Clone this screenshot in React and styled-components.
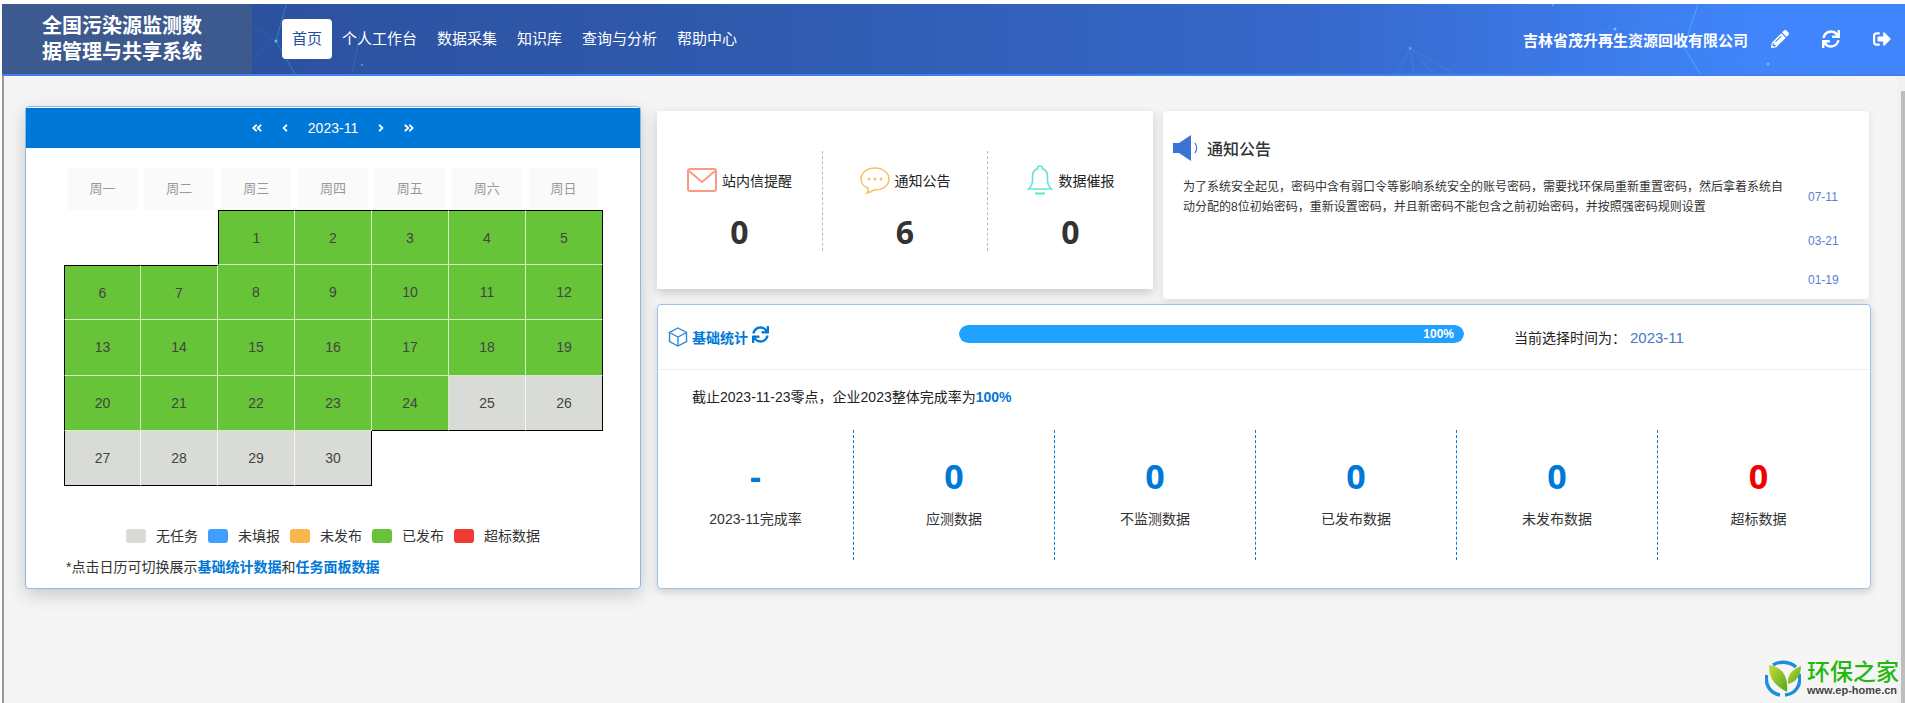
import { Fragment } from "react";
import styled, { createGlobalStyle } from "styled-components";
import {
  FaPencilAlt,
  FaSync,
  FaSignOutAlt,
  FaAngleDoubleLeft,
  FaAngleDoubleRight,
  FaAngleLeft,
  FaAngleRight,
} from "react-icons/fa";

const GlobalStyle = createGlobalStyle`
  html, body {
    margin: 0;
    padding: 0;
    height: 100%;
    overflow: hidden;
    background: #fff;
    font-family: "Liberation Sans", "Noto Sans CJK SC", sans-serif;
    font-size: 14px;
    color: #333;
  }
  * { box-sizing: border-box; }
`;

const navItems = ["首页", "个人工作台", "数据采集", "知识库", "查询与分析", "帮助中心"];
const weekDays = ["周一", "周二", "周三", "周四", "周五", "周六", "周日"];
const legend = [
  { label: "无任务", color: "#d9dbd6" },
  { label: "未填报", color: "#409eff" },
  { label: "未发布", color: "#fbb54d" },
  { label: "已发布", color: "#67c337" },
  { label: "超标数据", color: "#ee3a34" },
];
const baseStats = [
  { value: "-", label: "2023-11完成率" },
  { value: "0", label: "应测数据" },
  { value: "0", label: "不监测数据" },
  { value: "0", label: "已发布数据" },
  { value: "0", label: "未发布数据" },
  { value: "0", label: "超标数据", danger: true },
];

// the month starts on a wednesday, so two slots stay empty
const FIRST_SLOT = 2;
const DAY_COUNT = 30;
const isFilled = (slot) => slot >= FIRST_SLOT && slot < FIRST_SLOT + DAY_COUNT;

const slots = Array.from({ length: 35 }, (_, slot) => {
  if (!isFilled(slot)) return { slot, day: null };
  const col = slot % 7;
  return {
    slot,
    day: slot - FIRST_SLOT + 1,
    top: !isFilled(slot - 7),
    bottom: !isFilled(slot + 7),
    left: col === 0 || !isFilled(slot - 1),
    right: col === 6 || !isFilled(slot + 1),
  };
});

const Page = styled.div`
  display: flex;
  flex-direction: column;
  height: 703px;
  padding: 4px 0 0 2px;
  background: #fff;
  position: relative;
  overflow: hidden;
`;

const Header = styled.header`
  position: relative;
  display: flex;
  align-items: center;
  flex: 0 0 72px;
  height: 72px;
  border-bottom: 2px solid #4080f0;
  background: linear-gradient(90deg, #2b4d98 0%, #2f5aae 40%, #3769cc 70%, #4085fb 92%);
`;

const HeaderArt = styled.svg`
  position: absolute;
  left: 0;
  top: 0;
  pointer-events: none;
`;

const Brand = styled.div`
  position: relative;
  flex: 0 0 250px;
  align-self: stretch;
  display: flex;
  align-items: center;
  padding-left: 40px;
  background: #3c5a8e;
  color: #fff;
  font-size: 20px;
  font-weight: 700;
  line-height: 26px;
`;

const Nav = styled.nav`
  position: relative;
  display: flex;
  align-items: center;
  margin-left: 30px;
`;

const NavItem = styled.div`
  height: 40px;
  line-height: 40px;
  padding: 0 10px;
  font-size: 15px;
  border-radius: 4px;
  color: ${(p) => (p.$active ? "#23509f" : "#fff")};
  background: ${(p) => (p.$active ? "#fff" : "transparent")};
`;

const HeaderRight = styled.div`
  position: relative;
  display: flex;
  align-items: center;
  margin-left: auto;
  padding-right: 14px;
  color: #fff;
`;

const Company = styled.span`
  font-weight: 700;
  font-size: 15px;
  margin-right: 23px;
`;

const HeaderIcon = styled.span`
  display: inline-flex;
  font-size: 18px;
  margin-left: ${(p) => p.$gap || 0}px;
`;

const Main = styled.main`
  flex: 1;
  display: flex;
  align-items: flex-start;
  gap: 16px;
  padding: 30px 0 0 21px;
  background: #f5f5f5;
  border-left: 2px solid #999;
`;

const CalendarCard = styled.section`
  width: 616px;
  height: 483px;
  padding-top: 1px;
  background: #fff;
  border: 1px solid #8fb8ea;
  border-radius: 4px;
  box-shadow: 0 6px 18px rgba(0, 0, 0, 0.18);
`;

const MonthBar = styled.div`
  display: flex;
  align-items: center;
  justify-content: center;
  height: 40px;
  background: #0078d7;
  color: #fff;
  font-size: 14px;
`;

const MonthArrow = styled.span`
  display: inline-flex;
  font-size: 12px;
  margin: 0 ${(p) => p.$gap}px;
`;

const MonthLabel = styled.span`
  margin: 0 9px;
`;

const WeekRow = styled.div`
  display: grid;
  grid-template-columns: repeat(7, 1fr);
  width: 538px;
  margin: 20px 0 0 38px;
`;

const WeekDay = styled.div`
  height: 42px;
  line-height: 42px;
  margin: 0 3.5px;
  text-align: center;
  background: #fafafa;
  color: #999;
  font-size: 13px;
`;

const DayGrid = styled.div`
  display: grid;
  grid-template-columns: repeat(7, 1fr);
  grid-auto-rows: 55.2px;
  width: 539px;
  margin-left: 38px;
`;

const edge = (on, inner) => (on ? "1px solid #000" : inner ? "1px solid rgba(255,255,255,.7)" : "none");

const DayCell = styled.div`
  display: flex;
  align-items: center;
  justify-content: center;
  color: #444;
  font-size: 14px;
  background: ${(p) => (p.$done ? "#67c337" : "#d9dbd6")};
  border-top: ${(p) => edge(p.$top)};
  border-left: ${(p) => edge(p.$left)};
  border-right: ${(p) => edge(p.$right, true)};
  border-bottom: ${(p) => edge(p.$bottom, true)};
`;

const Legend = styled.div`
  display: flex;
  justify-content: center;
  align-items: center;
  gap: 10px;
  margin-top: 43px;
`;

const Swatch = styled.i`
  display: block;
  width: 20px;
  height: 14px;
  border-radius: 3px;
  background: ${(p) => p.$color};
`;

const LegendLabel = styled.span`
  font-size: 14px;
  line-height: 14px;
`;

const CalendarNote = styled.p`
  margin: 14px 0 0 40px;
  line-height: 20px;
  font-size: 14px;
`;

const NoteLink = styled.b`
  color: #0078d7;
  font-weight: 700;
`;

const RightColumn = styled.div`
  width: 1214px;
  margin-top: 5px;
`;

const TopRow = styled.div`
  display: flex;
  align-items: flex-start;
  gap: 10px;
`;

const MessageCard = styled.section`
  display: grid;
  grid-template-columns: 166px 165px 165px;
  width: 496px;
  height: 178px;
  padding-top: 40px;
  background: #fff;
  box-shadow: 0 4px 10px rgba(0, 0, 0, 0.18);
`;

const MessageItem = styled.div`
  height: 100px;
  padding-top: 11px;
  text-align: center;
  border-right: ${(p) => (p.$last ? "none" : "1px dashed #bbb")};
`;

const MessageHead = styled.div`
  display: flex;
  justify-content: center;
  align-items: center;
  gap: ${(p) => p.$gap || 5}px;
  height: 36px;
  font-size: 14px;
  color: #222;
`;

const MessageCount = styled.div`
  margin-top: 14px;
  line-height: 40px;
  font-family: "Open Sans", sans-serif;
  font-size: 32px;
  font-weight: 700;
  color: #333;
`;

const NoticeCard = styled.section`
  width: 706px;
  height: 188px;
  padding: 24px 0 0 10px;
  overflow: hidden;
  background: #fff;
  border-radius: 4px;
  box-shadow: 0 2px 8px rgba(0, 0, 0, 0.1);
`;

const NoticeTitle = styled.div`
  display: flex;
  align-items: center;
  gap: 9px;
  height: 26px;
  margin-bottom: 12px;
  font-size: 16px;
  font-weight: 500;
`;

const NoticeRow = styled.div`
  display: flex;
  align-items: center;
  height: ${(p) => p.$height}px;
  padding-left: 10px;
`;

const NoticeText = styled.p`
  flex: 0 0 606px;
  margin: 0;
  font-size: 12px;
  line-height: 20px;
`;

const NoticeDate = styled.span`
  margin-left: ${(p) => p.$gap}px;
  font-size: 12px;
  color: #5b80d0;
`;

const BaseCard = styled.section`
  width: 1214px;
  height: 285px;
  margin-top: 5px;
  background: #fff;
  border: 1px solid #9fc3ea;
  border-radius: 4px;
  box-shadow: 0 3px 8px rgba(0, 0, 0, 0.16);
`;

const BaseHead = styled.div`
  display: grid;
  grid-template-columns: 301px 505px 1fr;
  align-items: center;
  height: 65px;
  border-bottom: 1px solid #eee;
`;

const BaseTitle = styled.div`
  display: flex;
  align-items: center;
  gap: 4px;
  padding-left: 10px;
  color: #0078d7;
  font-size: 14px;
  font-weight: 700;
`;

const TitleRefresh = styled.span`
  display: inline-flex;
  font-size: 17px;
  margin-top: -6px;
`;

const ProgressTrack = styled.div`
  height: 18px;
  margin-bottom: 6px;
  border-radius: 9px;
  background: #e6ebf2;
  overflow: hidden;
`;

const ProgressBar = styled.div`
  height: 100%;
  padding-right: 10px;
  text-align: right;
  line-height: 18px;
  border-radius: 9px;
  background: #20a0ff;
  color: #fff;
  font-size: 12px;
  font-weight: 700;
`;

const CurrentTime = styled.div`
  padding-left: 50px;
  font-size: 14px;
  color: #222;
`;

const TimeValue = styled.span`
  margin-left: 4px;
  font-size: 15px;
  color: #3f78c8;
`;

const Summary = styled.p`
  margin: 17px 0 0 34px;
  line-height: 20px;
  font-size: 14px;
  color: #222;
`;

const SummaryValue = styled.b`
  color: #0078d7;
`;

const StatRow = styled.div`
  display: grid;
  grid-template-columns: 196px repeat(5, 201px);
  margin-top: 23px;
`;

const StatItem = styled.div`
  height: 130px;
  padding-top: 24px;
  text-align: center;
  border-right: ${(p) => (p.$last ? "none" : "1px dashed #0078d7")};
`;

const StatValue = styled.div`
  line-height: 44px;
  font-family: "Open Sans", sans-serif;
  font-size: 34px;
  font-weight: 700;
  color: ${(p) => (p.$danger ? "#f00000" : "#0078d7")};
`;

const StatLabel = styled.div`
  margin-top: 11px;
  line-height: 20px;
  font-size: 14px;
`;

const Watermark = styled.div`
  position: absolute;
  left: 1765px;
  top: 660px;
  display: flex;
  gap: 6px;
`;

const WatermarkText = styled.div`
  display: flex;
  flex-direction: column;
`;

const WatermarkName = styled.span`
  font-size: 23px;
  line-height: 25px;
  font-weight: 500;
  color: #22b80e;
`;

const WatermarkUrl = styled.span`
  font-size: 11px;
  line-height: 11px;
  font-weight: 700;
  color: #444;
  white-space: nowrap;
`;

const ScrollTrack = styled.div`
  position: absolute;
  right: 0;
  top: 76px;
  bottom: 0;
  width: 8px;
  padding-left: 4px;
  padding-top: 15px;
  background: #f1f1f1;
`;

const ScrollThumb = styled.div`
  height: 100%;
  background: #bdbdbd;
`;

function HeaderLines() {
  return (
    <HeaderArt width="1905" height="70" viewBox="0 0 1905 70">
      <g fill="none" stroke="#3fd0e8" strokeWidth="1">
        <path d="M285 -2 L274 37 L293 70" opacity=".35" />
        <path d="M274 37 L248 20 M274 37 L240 62" opacity=".12" />
        <path d="M358 30 L350 70" opacity=".2" />
        <path d="M1408 44 L1396 70 M1408 44 L1412 70 M1408 44 L1432 70 M1408 44 L1452 70" opacity=".2" />
        <path d="M1612 25 L1540 40 M1612 25 L1690 15 M1612 25 L1650 60" opacity=".1" />
        <path d="M1696 0 L1682 43 L1698 70" opacity=".6" />
        <path d="M1682 43 L1650 20 M1682 43 L1766 60" opacity=".1" />
        <path d="M1766 60 L1790 40 M1766 60 L1850 70" opacity=".1" />
      </g>
      <g fill="#63e2f2">
        <circle cx="274" cy="37" r="1.5" opacity=".8" />
        <circle cx="360" cy="61" r="1" opacity=".6" />
        <circle cx="1408" cy="44" r="1.5" opacity=".4" />
        <circle cx="1551" cy="1" r="1" opacity=".6" />
        <circle cx="1613" cy="25" r="1.5" opacity=".8" />
        <circle cx="1682" cy="43" r="1" opacity=".7" />
        <circle cx="1766" cy="60" r="1.5" opacity=".7" />
      </g>
    </HeaderArt>
  );
}

function MailIcon() {
  return (
    <svg width="30" height="24" viewBox="0 0 30 24" fill="none" stroke="#fa9a85" strokeWidth="2">
      <rect x="1" y="1" width="28" height="22" rx="2" />
      <path d="M2 3 L15 14 L28 3" />
    </svg>
  );
}

function ChatIcon() {
  return (
    <svg width="30" height="27" viewBox="0 0 30 27" fill="none" stroke="#fbbe6a" strokeWidth="1.6">
      <path d="M15 1 C7 1 1 6 1 12 C1 17 5 20 8 21 C8.5 23 8 25 7 26 C10 25.5 12 24 14 23 C22 23.5 29 19 29 12 C29 6 23 1 15 1 Z" />
      <g fill="#fbbe6a" stroke="none">
        <circle cx="9" cy="12" r="1.5" />
        <circle cx="15" cy="12" r="1.5" />
        <circle cx="21" cy="12" r="1.5" />
      </g>
    </svg>
  );
}

function BellIcon() {
  return (
    <svg width="26" height="30" viewBox="0 0 26 30" fill="none" stroke="#5de8d3" strokeWidth="1.7">
      <path d="M13 1 C11.5 1 10.5 2 10.5 3.6 C7 4.8 5.5 8 5.5 11.5 L5.5 16 C5.5 20 3.5 22 1.5 24 L24.5 24 C22.5 22 20.5 20 20.5 16 L20.5 11.5 C20.5 8 19 4.8 15.5 3.6 C15.5 2 14.5 1 13 1 Z" />
      <path d="M8 28.5 L18 28.5" strokeWidth="2" />
    </svg>
  );
}

function SpeakerIcon() {
  return (
    <svg width="25" height="26" viewBox="0 0 25 26">
      <path d="M0 8 L6 8 L18 0 L18 26 L6 18 L0 18 Z" fill="#3b73d4" />
      <path d="M22 8 C24 11 24 15 22 18" fill="none" stroke="#3b73d4" strokeWidth="1.2" />
    </svg>
  );
}

function CubeIcon() {
  return (
    <svg width="20" height="20" viewBox="0 0 20 20" fill="none" stroke="#2a8ad8" strokeWidth="1.4">
      <path d="M10 1 L18.5 5.5 L18.5 14.5 L10 19 L1.5 14.5 L1.5 5.5 Z" />
      <path d="M1.5 5.5 L10 10 L18.5 5.5 M10 10 L10 19" />
    </svg>
  );
}

function LeafLogo() {
  return (
    <svg width="36" height="37" viewBox="0 0 36 37">
      <defs>
        <linearGradient id="leaf" x1="0" y1="0" x2="1" y2="1">
          <stop offset="0" stopColor="#c9dc3c" />
          <stop offset="1" stopColor="#4fa71f" />
        </linearGradient>
      </defs>
      <g fill="none" stroke="#1b8fdc" strokeWidth="3.4">
        <path d="M8 5 C14 1 24 1 31 7" />
        <path d="M34 14 C37 24 31 34 20 35" />
        <path d="M15 35 C5 33 0 25 1.6 15" />
      </g>
      <path d="M4 5 C14 6 24 14 22 32 C14 28 3 20 4 5 Z" fill="url(#leaf)" />
      <path d="M23 24 C22 14 28 9 36 6 C36 14 32 22 23 24 Z" fill="url(#leaf)" />
    </svg>
  );
}

export default function App() {
  return (
    <>
      <GlobalStyle />
      <Page>
        <Header>
          <HeaderLines />
          <Brand>
            全国污染源监测数
            <br />
            据管理与共享系统
          </Brand>
          <Nav>
            {navItems.map((item, i) => (
              <NavItem key={item} $active={i === 0}>
                {item}
              </NavItem>
            ))}
          </Nav>
          <HeaderRight>
            <Company>吉林省茂升再生资源回收有限公司</Company>
            <HeaderIcon>
              <FaPencilAlt />
            </HeaderIcon>
            <HeaderIcon $gap={33}>
              <FaSync />
            </HeaderIcon>
            <HeaderIcon $gap={33}>
              <FaSignOutAlt />
            </HeaderIcon>
          </HeaderRight>
        </Header>

        <Main>
          <CalendarCard>
            <MonthBar>
              <MonthArrow $gap={8}>
                <FaAngleDoubleLeft />
              </MonthArrow>
              <MonthArrow $gap={8}>
                <FaAngleLeft />
              </MonthArrow>
              <MonthLabel>2023-11</MonthLabel>
              <MonthArrow $gap={8}>
                <FaAngleRight />
              </MonthArrow>
              <MonthArrow $gap={8}>
                <FaAngleDoubleRight />
              </MonthArrow>
            </MonthBar>
            <WeekRow>
              {weekDays.map((d) => (
                <WeekDay key={d}>{d}</WeekDay>
              ))}
            </WeekRow>
            <DayGrid>
              {slots.map((s) =>
                s.day ? (
                  <DayCell
                    key={s.slot}
                    $done={s.day < 25}
                    $top={s.top}
                    $bottom={s.bottom}
                    $left={s.left}
                    $right={s.right}
                  >
                    {s.day}
                  </DayCell>
                ) : (
                  <div key={s.slot} />
                )
              )}
            </DayGrid>
            <Legend>
              {legend.map((l) => (
                <Fragment key={l.label}>
                  <Swatch $color={l.color} />
                  <LegendLabel>{l.label}</LegendLabel>
                </Fragment>
              ))}
            </Legend>
            <CalendarNote>
              *点击日历可切换展示<NoteLink>基础统计数据</NoteLink>和<NoteLink>任务面板数据</NoteLink>
            </CalendarNote>
          </CalendarCard>

          <RightColumn>
            <TopRow>
              <MessageCard>
                <MessageItem>
                  <MessageHead>
                    <MailIcon />
                    站内信提醒
                  </MessageHead>
                  <MessageCount>0</MessageCount>
                </MessageItem>
                <MessageItem>
                  <MessageHead>
                    <ChatIcon />
                    通知公告
                  </MessageHead>
                  <MessageCount>6</MessageCount>
                </MessageItem>
                <MessageItem $last>
                  <MessageHead $gap={6}>
                    <BellIcon />
                    数据催报
                  </MessageHead>
                  <MessageCount>0</MessageCount>
                </MessageItem>
              </MessageCard>

              <NoticeCard>
                <NoticeTitle>
                  <SpeakerIcon />
                  通知公告
                </NoticeTitle>
                <NoticeRow $height={48}>
                  <NoticeText>
                    为了系统安全起见，密码中含有弱口令等影响系统安全的账号密码，需要找环保局重新重置密码，然后拿着系统自
                    <br />
                    动分配的8位初始密码，重新设置密码，并且新密码不能包含之前初始密码，并按照强密码规则设置
                  </NoticeText>
                  <NoticeDate $gap={19}>07-11</NoticeDate>
                </NoticeRow>
                <NoticeRow $height={39}>
                  <NoticeDate $gap={625}>03-21</NoticeDate>
                </NoticeRow>
                <NoticeRow $height={39}>
                  <NoticeDate $gap={625}>01-19</NoticeDate>
                </NoticeRow>
              </NoticeCard>
            </TopRow>

            <BaseCard>
              <BaseHead>
                <BaseTitle>
                  <CubeIcon />
                  基础统计
                  <TitleRefresh>
                    <FaSync />
                  </TitleRefresh>
                </BaseTitle>
                <ProgressTrack>
                  <ProgressBar style={{ width: "100%" }}>100%</ProgressBar>
                </ProgressTrack>
                <CurrentTime>
                  当前选择时间为：<TimeValue>2023-11</TimeValue>
                </CurrentTime>
              </BaseHead>
              <Summary>
                截止2023-11-23零点，企业2023整体完成率为<SummaryValue>100%</SummaryValue>
              </Summary>
              <StatRow>
                {baseStats.map((s, i) => (
                  <StatItem key={s.label} $last={i === baseStats.length - 1}>
                    <StatValue $danger={s.danger}>{s.value}</StatValue>
                    <StatLabel>{s.label}</StatLabel>
                  </StatItem>
                ))}
              </StatRow>
            </BaseCard>
          </RightColumn>
        </Main>

        <ScrollTrack>
          <ScrollThumb />
        </ScrollTrack>
        <Watermark>
          <LeafLogo />
          <WatermarkText>
            <WatermarkName>环保之家</WatermarkName>
            <WatermarkUrl>www.ep-home.cn</WatermarkUrl>
          </WatermarkText>
        </Watermark>
      </Page>
    </>
  );
}
